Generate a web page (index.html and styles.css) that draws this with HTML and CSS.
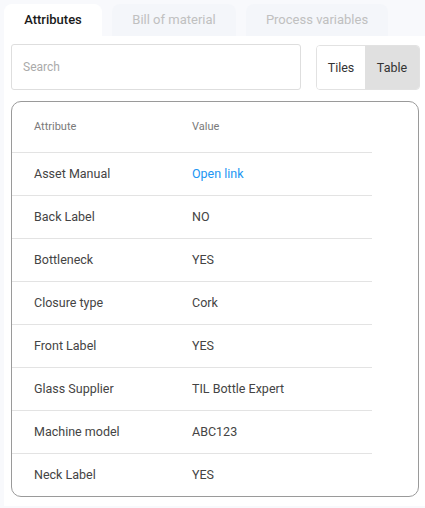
FILE: index.html
```html
<!DOCTYPE html>
<html>
<head>
<meta charset="utf-8">
<link rel="stylesheet" href="styles.css">
</head>
<body>
<div class="page">
  <div class="tabs">
    <div class="tab active t1">Attributes</div>
    <div class="tab t2">Bill of material</div>
    <div class="tab t3">Process variables</div>
  </div>
  <div class="panel">
    <div class="toolbar">
      <input class="search" type="text" placeholder="Search">
      <div class="toggle">
        <div class="opt">Tiles</div>
        <div class="opt on">Table</div>
      </div>
    </div>
    <div class="card">
      <table class="attrs">
        <thead>
          <tr><th class="c1">Attribute</th><th>Value</th></tr>
        </thead>
        <tbody>
          <tr><td class="c1">Asset Manual</td><td><a class="link">Open link</a></td></tr>
          <tr><td class="c1">Back Label</td><td>NO</td></tr>
          <tr><td class="c1">Bottleneck</td><td>YES</td></tr>
          <tr><td class="c1">Closure type</td><td>Cork</td></tr>
          <tr><td class="c1">Front Label</td><td>YES</td></tr>
          <tr><td class="c1">Glass Supplier</td><td>TIL Bottle Expert</td></tr>
          <tr><td class="c1">Machine model</td><td>ABC123</td></tr>
          <tr class="last"><td class="c1">Neck Label</td><td>YES</td></tr>
        </tbody>
      </table>
    </div>
  </div>
</div>
</body>
</html>
```
FILE: styles.css
```css
* { box-sizing: border-box; }
html, body { margin: 0; padding: 0; }
body {
  background: #f8f9fc;
  font-family: Roboto, "Liberation Sans", sans-serif;
  color: #333;
}
.page {
  padding: 4px 0 2px 4px;
}
.tabs {
  display: flex;
  gap: 10px;
  height: 32px;
}
.tab {
  text-align: center;
  line-height: 32px;
  font-size: 13px;
  color: #c0c0c0;
  background: #f4f6fa;
  border-radius: 8px 8px 0 0;
  white-space: nowrap;
}
.t1 { width: 98px; }
.t2 { width: 124px; }
.t3 { width: 142px; }
.tab.active {
  background: #fff;
  color: #1a1a1a;
  font-weight: 500;
}
.panel {
  background: #fff;
  padding: 8px 6px 9px 7px;
}
.toolbar {
  display: flex;
  align-items: flex-start;
  gap: 15px;
}
.search {
  flex: 0 0 290px;
  width: 290px;
  height: 46px;
  border: 1px solid #dedede;
  border-radius: 3px;
  padding: 0 11px;
  font-family: inherit;
  font-size: 12px;
  color: #333;
  outline: none;
}
.search::placeholder { color: #aaa; }
.toggle {
  display: flex;
  flex: 0 0 auto;
  margin-top: 1px;
  height: 45px;
  border: 1px solid #e2e2e2;
  border-radius: 4px;
  overflow: hidden;
}
.opt {
  display: flex;
  align-items: center;
  justify-content: center;
  width: 48px;
  font-size: 12.5px;
  color: #333;
  background: #fff;
}
.opt.on {
  background: #e0e0e0;
  width: 54px;
}
.toolbar + .card { margin-top: 11px; }
.card {
  border: 1px solid #9a9a9a;
  border-radius: 10px;
  height: 396px;
  overflow: hidden;
}
.attrs {
  border-collapse: collapse;
  width: 360px;
}
.attrs th {
  text-align: left;
  font-weight: 400;
  font-size: 11px;
  color: #7a7a7a;
  height: 50px;
  padding: 0;
  border-bottom: 1px solid #e3e3e3;
}
.attrs td {
  height: 43px;
  padding: 0;
  font-size: 12.5px;
  color: #444;
  border-bottom: 1px solid #e3e3e3;
}
.attrs tr.last td { border-bottom: none; }
.attrs .c1 {
  width: 180px;
  padding-left: 22px;
}
.link {
  color: #2196f3;
  text-decoration: none;
}
```
